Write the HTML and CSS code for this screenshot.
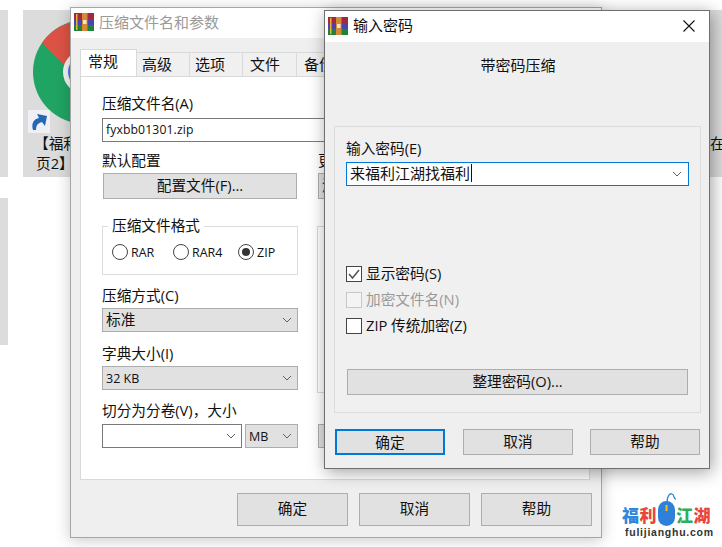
FILE: index.html
```html
<!DOCTYPE html>
<html lang="zh">
<head>
<meta charset="utf-8">
<title>输入密码</title>
<link rel="stylesheet" href="styles.css">
</head>
<body>
<div class="desktop">
  <div class="tile tile-a"></div>
  <div class="tile tile-b"></div>
  <div class="tile tile-main">
    <svg class="chrome" viewBox="0 0 104 104" width="104" height="104">
      <circle cx="52" cy="52" r="52" fill="#20a463"/>
      <path d="M9 23A52 52 0 0 1 104 52L52 52L31 45Z" fill="#dc5245"/>
      <circle cx="52" cy="52" r="22" fill="#f4f4f4"/>
      <circle cx="52" cy="52" r="17" fill="#3f7fe0"/>
    </svg>
    <div class="shortcut">
      <svg viewBox="0 0 22 23" width="22" height="23"><path d="M5 20C3 13 6 9 11 8L9 4L19 6L17 16L14 12C10 13 8 15 8 20Z" fill="#2467b3"/></svg>
    </div>
    <div class="tile-text tile-line-1">【福利江湖</div>
    <div class="tile-text tile-line-2">页2】</div>
    <div class="tile-text tile-right">在</div>
  </div>

  <section class="window window-back">
    <header class="titlebar">
      <svg class="app-icon" viewBox="0 0 20 18" width="20" height="18"><rect width="20" height="6" fill="#a3283f"/><rect y="6" width="20" height="6" fill="#4a45a8"/><rect y="12" width="20" height="6" fill="#21803c"/><rect x="8" width="5.500" height="18" fill="#d58a35"/><rect x="2" y="1" width="1.500" height="16" fill="#e8b23c"/><rect x="9" y="7" width="3.500" height="4" fill="#f2e6d0"/></svg>
      <span class="title-muted">压缩文件名和参数</span>
    </header>
    <div class="client client-back">
      <nav class="tabs">
        <div class="tab tab-active">常规</div>
        <div class="tab tab-2">高级</div>
        <div class="tab tab-2">选项</div>
        <div class="tab tab-3">文件</div>
        <div class="tab tab-4">备份</div>
        <div class="tab tab-4">时间</div>
      </nav>
      <div class="page">
        <div class="label">压缩文件名(A)</div>
        <div class="field field-name">fyxbb01301.zip</div>
        <div class="columns">
          <div class="col">
            <div class="label label-default">默认配置</div>
            <button class="btn btn-profile">配置文件(F)...</button>
            <fieldset class="format">
              <legend>压缩文件格式</legend>
              <div class="radios">
                <div class="radio-item"><span class="radio"></span>RAR</div>
                <div class="radio-item"><span class="radio"></span>RAR4</div>
                <div class="radio-item"><span class="radio radio-on"></span>ZIP</div>
              </div>
            </fieldset>
            <div class="label label-method">压缩方式(C)</div>
            <div class="select select-cjk"><span class="select-text">标准</span><svg class="chev" viewBox="0 0 10 6" width="10" height="6"><path d="M1 1L5 5L9 1" fill="none" stroke="#606060"/></svg></div>
            <div class="label label-dict">字典大小(I)</div>
            <div class="select">32 KB<svg class="chev" viewBox="0 0 10 6" width="10" height="6"><path d="M1 1L5 5L9 1" fill="none" stroke="#606060"/></svg></div>
            <div class="label label-split">切分为分卷(V)，大小</div>
            <div class="split">
              <div class="field field-split"><svg class="chev" viewBox="0 0 10 6" width="10" height="6"><path d="M1 1L5 5L9 1" fill="none" stroke="#606060"/></svg></div>
              <div class="select select-unit">MB<svg class="chev" viewBox="0 0 10 6" width="10" height="6"><path d="M1 1L5 5L9 1" fill="none" stroke="#606060"/></svg></div>
            </div>
          </div>
          <div class="col col-right">
            <div class="label label-default">更新方式</div>
            <button class="btn btn-update">添加并替换文件</button>
            <div class="options-box"></div>
            <button class="btn btn-set">设置密码(P)...</button>
          </div>
        </div>
      </div>
      <footer class="actions actions-back">
        <button class="btn btn-back">确定</button>
        <button class="btn btn-back">取消</button>
        <button class="btn btn-back">帮助</button>
      </footer>
    </div>
  </section>

  <section class="window window-front">
    <header class="titlebar titlebar-front">
      <svg class="app-icon" viewBox="0 0 20 18" width="20" height="18"><rect width="20" height="6" fill="#a3283f"/><rect y="6" width="20" height="6" fill="#4a45a8"/><rect y="12" width="20" height="6" fill="#21803c"/><rect x="8" width="5.500" height="18" fill="#d58a35"/><rect x="2" y="1" width="1.500" height="16" fill="#e8b23c"/><rect x="9" y="7" width="3.500" height="4" fill="#f2e6d0"/></svg>
      <span class="title-text">输入密码</span>
      <svg class="close" viewBox="0 0 12 12" width="12" height="12"><path d="M0.500 0.500L11.500 11.500M11.500 0.500L0.500 11.500" stroke="#111" stroke-width="1.100"/></svg>
    </header>
    <div class="client client-front">
      <div class="heading">带密码压缩</div>
      <div class="pw-group">
        <div class="label label-pw">输入密码(E)</div>
        <div class="pw-input"><span class="pw-value">来福利江湖找福利</span><svg class="chev" viewBox="0 0 10 6" width="10" height="6"><path d="M1 1L5 5L9 1" fill="none" stroke="#606060"/></svg></div>
        <div class="check check-first"><span class="box"><svg viewBox="0 0 14 14" width="14" height="14"><path d="M2 7L5.500 11L12 3" fill="none" stroke="#555" stroke-width="1.500"/></svg></span>显示密码(S)</div>
        <div class="check check-off"><span class="box"></span>加密文件名(N)</div>
        <div class="check"><span class="box"></span>ZIP 传统加密(Z)</div>
        <button class="btn btn-organize">整理密码(O)...</button>
      </div>
      <footer class="actions actions-front">
        <button class="btn btn-front btn-default">确定</button>
        <button class="btn btn-front">取消</button>
        <button class="btn btn-front">帮助</button>
      </footer>
    </div>
  </section>

  <div class="logo">
    <div class="logo-title">
      <span class="c-blue">福</span><span class="c-red">利</span>
      <svg class="mouse" viewBox="0 0 20 34" width="20" height="34"><path d="M10 10C10 4 13 1 15 2C18 3 16 7 19 7" fill="none" stroke="#2f80d8" stroke-width="1.300"/><rect x="1" y="9" width="17" height="25" rx="8.500" fill="#2f80d8"/><rect x="8.500" y="13" width="2" height="6" fill="#f0c419"/></svg>
      <span class="c-green">江</span><span class="c-red">湖</span>
    </div>
    <div class="logo-url">fulijianghu.com</div>
  </div>
</div>
</body>
</html>
```

FILE: styles.css
```css
* { box-sizing: border-box; }
html, body { margin: 0; padding: 0; }
body {
  background: #fff;
  font-family: "Open Sans", "Noto Sans CJK SC", sans-serif;
  font-size: 14.67px;
  color: #111;
}
.desktop { position: relative; width: 722px; height: 547px; overflow: hidden; background: #fff; }

.tile { position: absolute; background: #dcdcdc; }
.tile-a { left: 0; top: 10px; width: 8px; height: 167px; }
.tile-b { left: 0; top: 198px; width: 8px; height: 147px; }
.tile-main { left: 23px; top: 10px; width: 699px; height: 167px; overflow: hidden; }
.chrome { position: absolute; left: 10px; top: 10px; }
.shortcut {
  position: absolute; left: 5px; top: 100px; width: 22px; height: 23px;
  background: #eef0f3; display: flex;
}
.tile-text { position: absolute; line-height: 20px; color: #111; white-space: nowrap; }
.tile-line-1 { left: 11px; top: 123px; }
.tile-line-2 { left: 13px; top: 143px; }
.tile-right { left: 687px; top: 123px; }

.window { position: absolute; display: flex; flex-direction: column; }
.window-back {
  left: 70px; top: 7px; width: 532px; height: 531px;
  border: 1px solid #a6a6a6; box-shadow: 0 2px 14px rgba(0,0,0,.22);
}
.window-front {
  left: 324px; top: 10px; width: 386px; height: 459px;
  border: 1px solid #6f6f6f; box-shadow: 2px 3px 16px rgba(0,0,0,.38);
}
.titlebar { height: 30px; background: #fff; display: flex; align-items: center; padding-left: 3px; flex: none; }
.titlebar-front { height: 31px; }
.app-icon { flex: none; margin-top: -2px; }
.title-muted { margin-left: 5px; font-size: 15px; color: #9a9a9a; line-height: 18px; padding-bottom: 2px; }
.title-text { margin-left: 5px; font-size: 15px; color: #111; line-height: 18px; padding-bottom: 3px; }
.close { margin-left: auto; margin-right: 14px; margin-top: -1px; }

.client { flex: 1; background: #efefef; display: flex; flex-direction: column; min-height: 0; }
.client-back { padding: 11px 9px 0 9px; }

.tabs { display: flex; align-items: flex-end; height: 27px; overflow: hidden; flex: none; }
.tab {
  height: 24px; line-height: 22px; padding-left: 5px; white-space: nowrap;
  background: #f0f0f0; border: 1px solid #d9d9d9; border-bottom: none; border-left: none;
  font-size: 15px; flex: none;
}
.tab-active {
  width: 57px; height: 27px; line-height: 22px; padding-left: 7px; background: #fff;
  border-left: 1px solid #d9d9d9;
}
.tab-2 { width: 53px; }
.tab-3 { width: 54px; padding-left: 7px; }
.tab-4 { width: 60px; padding-left: 7px; }

.page {
  width: 510px; height: 404px; background: #fff;
  border: 1px solid #d9d9d9; padding: 17px 0 0 21px; flex: none;
}
.label { height: 20px; line-height: 18px; white-space: nowrap; }
.label-pw { line-height: 20px; }
.field { height: 24px; border: 1px solid #7a7a7a; background: #fff; }
.field-name { margin-top: 4px; width: 467px; padding-left: 3px; line-height: 22px; font-size: 12.200px; letter-spacing: .01em; }
.columns { display: grid; grid-template-columns: 196px 250px; column-gap: 20px; }
.col { min-width: 0; }
.label-default { margin-top: 9px; }
.btn {
  display: block; margin: 0; padding: 0 0 4px; font: inherit; color: #111;
  background: #e1e1e1; border: 1px solid #adadad;
}
.btn-profile { width: 194px; height: 26px; margin: 2px 1px 0; }
.btn-update { width: 250px; height: 26px; margin-top: 2px; text-align: left; padding-left: 3px; }
.options-box { height: 167px; margin-top: 27px; border: 1px solid #d9d9d9; margin-left: -1px; }
.btn-set { width: 250px; height: 24px; margin-top: 31px; }

.format {
  margin: 17px 0 0; padding: 7px 0 13px 9px; min-width: 0; width: 196px;
  border: 1px solid #dcdcdc;
}
.format legend { margin-left: -4px; padding: 0 4px 2px; line-height: 18px; }
.radios { display: grid; grid-template-columns: 61px 65px auto; height: 18px; }
.radio-item { display: flex; align-items: center; font-size: 12.500px; }
.radio {
  width: 16px; height: 16px; border-radius: 50%; border: 1px solid #444; background: #fff;
  margin-right: 3px; flex: none; position: relative;
}
.radio-on::after {
  content: ""; position: absolute; left: 3px; top: 3px; width: 8px; height: 8px;
  border-radius: 50%; background: #333;
}
.label-method { margin-top: 11px; }
.label-dict { margin-top: 12px; }
.label-split { margin-top: 11px; }
.select {
  display: flex; align-items: center; justify-content: space-between;
  height: 24px; margin-top: 2px; padding: 0 5px 0 3px;
  background: #e1e1e1; border: 1px solid #adadad; font-size: 12.500px;
}
.select-cjk { font-size: 14.67px; }
.select-text { line-height: 18px; padding-bottom: 3px; }
.chev { flex: none; }
.split { display: flex; gap: 3px; margin-top: 3px; }
.field-split { width: 140px; display: flex; align-items: center; justify-content: flex-end; padding-right: 5px; }
.select-unit { width: 53px; margin-top: 0; }

.actions { display: flex; flex: none; }
.actions-back { justify-content: flex-end; gap: 11px; margin: 13px 0 0; }
.btn-back { width: 111px; height: 33px; }

.heading { height: 20px; line-height: 20px; margin-top: 13px; text-align: center; flex: none; font-size: 15px; padding-left: 2px; }
.pw-group {
  width: 367px; height: 287px; margin: 51px 0 0 9px; padding: 11px 11px 0;
  border: 1px solid #dcdcdc; background: #f0f0f0; flex: none;
}
.pw-input {
  display: flex; align-items: center; justify-content: space-between;
  height: 24px; margin-top: 4px; padding: 0 6px 0 3px;
  background: #fff; border: 1px solid #0078d7;
}
.pw-value { font-size: 15px; border-right: 1px solid #111; line-height: 18px; height: 18px; padding-right: 1px; margin-top: -2px; }
.check { display: flex; align-items: flex-start; height: 20px; line-height: 18px; margin-top: 6px; white-space: nowrap; }
.check-first { margin-top: 78px; }
.box {
  width: 16px; height: 16px; border: 1px solid #444; background: #fff; margin-top: 2px;
  margin-right: 4px; flex: none; display: flex; align-items: center; justify-content: center;
}
.check-off { color: #9a9a9a; }
.check-off .box { border-color: #c8c8c8; background: #f4f4f4; }
.btn-organize { width: 341px; height: 26px; margin: 33px 1px 0; }
.actions-front { gap: 18px; margin: 16px 0 0 10px; }
.btn-front { width: 110px; height: 26px; }
.btn-front + .btn-front + .btn-front { margin-left: -1px; }
.btn-default { border: 2px solid #0078d7; }

.logo { position: absolute; left: 622px; top: 492px; width: 92px; }
.logo-title {
  display: flex; align-items: flex-end; height: 34px;
  font-family: "Noto Sans CJK SC", sans-serif; font-weight: 900; font-size: 17px; line-height: 22px;
}
.logo-title span { width: 17.500px; }
.mouse { flex: none; margin: 0 -1px 0 0; }
.c-blue { color: #2f86dc; }
.c-red { color: #e8453c; }
.c-green { color: #2fae5a; }
.logo-url {
  font-family: "Liberation Sans", sans-serif; font-weight: 700; font-size: 10.500px;
  letter-spacing: .75px; line-height: 12px; color: #333; margin: 0 0 0 3px; white-space: nowrap;
}
```
